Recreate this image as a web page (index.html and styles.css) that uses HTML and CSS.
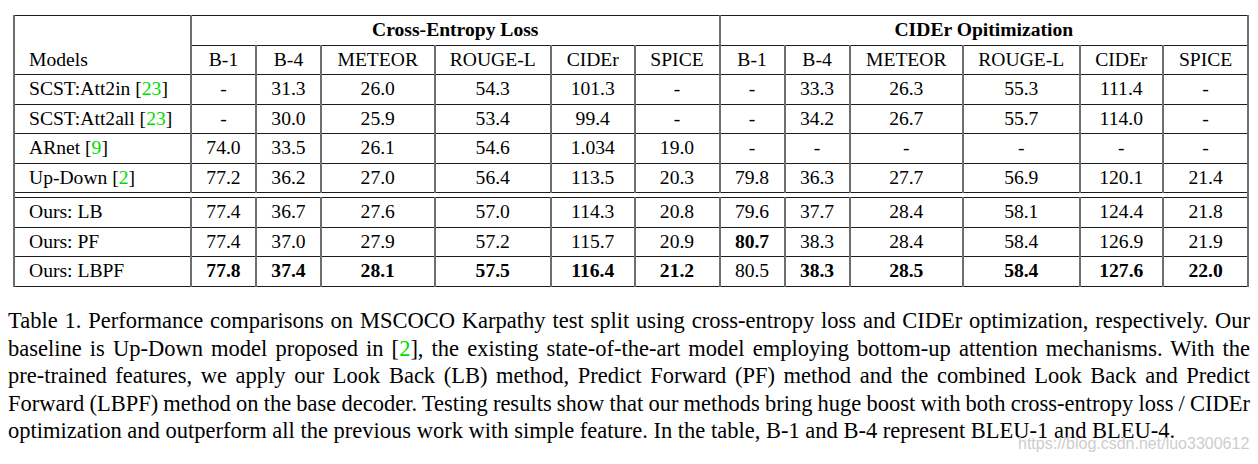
FILE: index.html
```html
<!DOCTYPE html>
<html lang="en">
<head>
<meta charset="utf-8">
<title>Table 1</title>
<link rel="stylesheet" href="styles.css">
</head>
<body>
<div class="page">
  <table class="results">
    <colgroup>
      <col class="col-model">
      <col class="col-b"><col class="col-b"><col class="col-meteor"><col class="col-rouge"><col class="col-cider"><col class="col-spice">
      <col class="col-b"><col class="col-b"><col class="col-meteor"><col class="col-rouge"><col class="col-cider"><col class="col-spice">
    </colgroup>
    <thead>
      <tr>
        <th class="model-head" rowspan="2">Models</th>
        <th class="group" colspan="6">Cross-Entropy Loss</th>
        <th class="group" colspan="6">CIDEr Opitimization</th>
      </tr>
      <tr class="metrics">
        <th>B-1</th><th>B-4</th><th>METEOR</th><th>ROUGE-L</th><th>CIDEr</th><th>SPICE</th>
        <th>B-1</th><th>B-4</th><th>METEOR</th><th>ROUGE-L</th><th>CIDEr</th><th>SPICE</th>
      </tr>
    </thead>
    <tbody>
      <tr>
        <td class="model">SCST:Att2in [<span class="cite">23</span>]</td>
        <td>-</td><td>31.3</td><td>26.0</td><td>54.3</td><td>101.3</td><td>-</td>
        <td>-</td><td>33.3</td><td>26.3</td><td>55.3</td><td>111.4</td><td>-</td>
      </tr>
      <tr>
        <td class="model">SCST:Att2all [<span class="cite">23</span>]</td>
        <td>-</td><td>30.0</td><td>25.9</td><td>53.4</td><td>99.4</td><td>-</td>
        <td>-</td><td>34.2</td><td>26.7</td><td>55.7</td><td>114.0</td><td>-</td>
      </tr>
      <tr>
        <td class="model">ARnet [<span class="cite">9</span>]</td>
        <td>74.0</td><td>33.5</td><td>26.1</td><td>54.6</td><td>1.034</td><td>19.0</td>
        <td>-</td><td>-</td><td>-</td><td>-</td><td>-</td><td>-</td>
      </tr>
      <tr>
        <td class="model">Up-Down [<span class="cite">2</span>]</td>
        <td>77.2</td><td>36.2</td><td>27.0</td><td>56.4</td><td>113.5</td><td>20.3</td>
        <td>79.8</td><td>36.3</td><td>27.7</td><td>56.9</td><td>120.1</td><td>21.4</td>
      </tr>
      <tr class="gap"><td colspan="13"></td></tr>
      <tr>
        <td class="model">Ours: LB</td>
        <td>77.4</td><td>36.7</td><td>27.6</td><td>57.0</td><td>114.3</td><td>20.8</td>
        <td>79.6</td><td>37.7</td><td>28.4</td><td>58.1</td><td>124.4</td><td>21.8</td>
      </tr>
      <tr>
        <td class="model">Ours: PF</td>
        <td>77.4</td><td>37.0</td><td>27.9</td><td>57.2</td><td>115.7</td><td>20.9</td>
        <td class="best">80.7</td><td>38.3</td><td>28.4</td><td>58.4</td><td>126.9</td><td>21.9</td>
      </tr>
      <tr>
        <td class="model">Ours: LBPF</td>
        <td class="best">77.8</td><td class="best">37.4</td><td class="best">28.1</td><td class="best">57.5</td><td class="best">116.4</td><td class="best">21.2</td>
        <td>80.5</td><td class="best">38.3</td><td class="best">28.5</td><td class="best">58.4</td><td class="best">127.6</td><td class="best">22.0</td>
      </tr>
    </tbody>
  </table>

  <p class="caption">
    <span class="line">Table 1. Performance comparisons on MSCOCO Karpathy test split using cross-entropy loss and CIDEr optimization, respectively. Our</span>
    <span class="line">baseline is Up-Down model proposed in [<span class="cite">2</span>], the existing state-of-the-art model employing bottom-up attention mechanisms. With the</span>
    <span class="line">pre-trained features, we apply our Look Back (LB) method, Predict Forward (PF) method and the combined Look Back and Predict</span>
    <span class="line tight">Forward (LBPF) method on the base decoder. Testing results show that our methods bring huge boost with both cross-entropy loss / CIDEr</span>
    <span class="line last">optimization and outperform all the previous work with simple feature. In the table, B-1 and B-4 represent BLEU-1 and BLEU-4.</span>
  </p>

  <div class="watermark">https://blog.csdn.net/luo3300612</div>
</div>
</body>
</html>
```

FILE: styles.css
```css
html, body {
  margin: 0;
  padding: 0;
  background: #ffffff;
}

.page {
  position: relative;
  width: 1258px;
  height: 464px;
  padding-top: 15px;
  box-sizing: border-box;
  font-family: "Liberation Serif", "Times New Roman", serif;
  color: #000;
}

.results {
  margin-left: 13px;
  border-collapse: collapse;
  table-layout: fixed;
  width: 1235px;
  font-size: 19.6px;
  line-height: 28.5px;
}

.col-model { width: 177px; }
.col-b { width: 65px; }
.col-meteor { width: 113.5px; }
.col-rouge { width: 116.5px; }
.col-cider { width: 83.5px; }
.col-spice { width: 85px; }

.results th,
.results td {
  padding: 0;
  text-align: center;
  vertical-align: middle;
  white-space: nowrap;
  border-top: 1px solid #1c1c1c;
  border-bottom: 1px solid #1c1c1c;
  border-left: 2px solid #6e6e6e;
  border-right: 2px solid #6e6e6e;
}

.results th {
  font-weight: normal;
}

.results th.group {
  font-weight: bold;
}

.results th.model-head {
  text-align: left;
  vertical-align: bottom;
  padding-left: 14px;
}

.results td.model {
  text-align: left;
  padding-left: 14px;
}

.results td.best {
  font-weight: bold;
}

.cite {
  color: #00dc00;
}

.results tr.gap td {
  height: 4px;
  line-height: 0;
  font-size: 0;
  border-left: 2px solid #6e6e6e;
  border-right: 2px solid #6e6e6e;
}

.caption {
  margin: 20.6px 8px 0 8px;
  width: 1242px;
  font-size: 22.5px;
  line-height: 27.6px;
}

.caption .line {
  display: block;
  text-align: justify;
  text-align-last: justify;
  white-space: nowrap;
}

.caption .line.tight {
  word-spacing: -1px;
}

.caption .line.last {
  text-align: left;
  text-align-last: left;
}

.watermark {
  position: absolute;
  left: 1018px;
  top: 435px;
  font-family: "Liberation Sans", Arial, sans-serif;
  font-size: 16px;
  color: #cdcdcd;
  text-shadow: 0 0 1px #ffffff;
  white-space: nowrap;
}
```
